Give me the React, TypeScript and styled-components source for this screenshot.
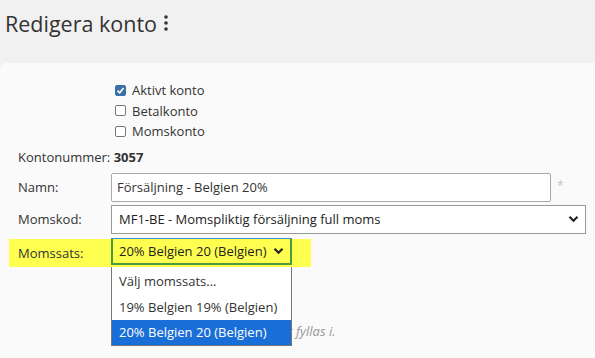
import styled, { createGlobalStyle } from 'styled-components';

const GlobalStyle = createGlobalStyle`
  html, body {
    margin: 0;
    padding: 0;
    background: #f1f1f1;
    font-family: "Open Sans", "Noto Sans", sans-serif;
    color: #333;
  }
`;

const Page = styled.div`
  width: 595px;
  height: 358px;
  overflow: hidden;
  display: flex;
  flex-direction: column;
`;

const Header = styled.div`
  display: flex;
  align-items: center;
  gap: 6px;
  height: 63px;
  padding: 0 0 17px 5px;
  box-sizing: border-box;
`;

const Title = styled.h1`
  margin: 0;
  font-size: 21.5px;
  font-weight: 400;
  color: #333;
`;

const Panel = styled.div`
  flex: 1;
  background: #fafafa;
  border-radius: 6px 0 0 0;
  padding: 19px 9px 0 9px;
  position: relative;
`;

const CheckList = styled.div`
  display: flex;
  flex-direction: column;
  gap: 4px;
  padding-left: 106px;
`;

const CheckRow = styled.label`
  display: flex;
  align-items: center;
  gap: 6px;
  font-size: 13px;
  height: 16.5px;
`;

const Box = styled.span<{ $checked?: boolean }>`
  width: 11px;
  height: 11px;
  border-radius: 2px;
  box-sizing: border-box;
  border: 1px solid ${p => (p.$checked ? '#3c6fa5' : '#777')};
  background: ${p => (p.$checked ? '#3c6fa5' : '#fff')};
  display: flex;
  align-items: center;
  justify-content: center;
`;

const Info = styled.div`
  font-size: 13px;
  padding: 8px 0 0 9px;
  height: 22px;
  b {
    font-weight: 700;
  }
`;

const Row = styled.div<{ $highlight?: boolean }>`
  display: flex;
  align-items: center;
  margin-top: 3px;
  background: ${p => (p.$highlight ? '#ffff50' : 'transparent')};
  position: relative;
`;

const HighlightRow = styled(Row)`
  width: 302px;
  margin-top: 5px;
  height: 28px;
`;

const Label = styled.div`
  width: 93px;
  padding-left: 9px;
  font-size: 13px;
  flex-shrink: 0;
`;

const TextInput = styled.div`
  width: 440px;
  height: 29px;
  box-sizing: border-box;
  border: 1px solid #aaa;
  border-radius: 2px;
  background: #fff;
  font-size: 13px;
  display: flex;
  align-items: center;
  padding-left: 5px;
`;

const Star = styled.span`
  margin-left: 6px;
  color: #b9c6d3;
  font-size: 12px;
  margin-top: -4px;
`;

const Select = styled.div<{ $width: number; $focus?: boolean }>`
  width: ${p => p.$width}px;
  height: ${p => (p.$focus ? 27 : 29)}px;
  box-sizing: border-box;
  border: ${p => (p.$focus ? '2px solid #4c9a3c' : '1px solid #999')};
  border-top: 1px solid ${p => (p.$focus ? '#3b8fd9' : '#999')};
  background: ${p => (p.$focus ? 'transparent' : '#fff')};
  font-size: 13px;
  display: flex;
  align-items: center;
  justify-content: space-between;
  padding: 0 6px 0 ${p => (p.$focus ? 6 : 7)}px;
  color: #222;
  align-self: flex-start;
  margin-top: ${p => (p.$focus ? -1 : 0)}px;
`;

const Chevron = () => (
  <svg width="11" height="8" viewBox="0 0 11 8">
    <path d="M1.5 1.8 L5.5 5.8 L9.5 1.8" stroke="#222" strokeWidth="2.2" fill="none" />
  </svg>
);

const Dropdown = styled.ul`
  position: absolute;
  left: 102px;
  top: 100%;
  width: 181px;
  margin: 0;
  padding: 0;
  list-style: none;
  background: #fff;
  border: 1px solid #777;
  border-top: none;
  box-sizing: border-box;
  z-index: 2;
`;

const Option = styled.li<{ $selected?: boolean }>`
  height: 25px;
  display: flex;
  align-items: center;
  padding-left: 7px;
  font-size: 13px;
  color: ${p => (p.$selected ? '#fff' : '#333')};
  background: ${p => (p.$selected ? '#1a6ed8' : 'transparent')};
  &:first-child {
    height: 28px;
  }
`;

const Note = styled.div`
  margin-top: 55px;
  padding-left: 107px;
  font-size: 13px;
  font-style: italic;
  color: #999;
`;

const Kebab = () => (
  <svg width="6" height="20" viewBox="0 0 6 20">
    <circle cx="3" cy="4" r="1.8" fill="#333" />
    <circle cx="3" cy="10" r="1.8" fill="#333" />
    <circle cx="3" cy="16" r="1.8" fill="#333" />
  </svg>
);

const Check = () => (
  <svg width="9" height="9" viewBox="0 0 9 9">
    <path d="M1.5 4.6 L3.6 6.7 L7.6 2" stroke="#fff" strokeWidth="1.6" fill="none" />
  </svg>
);

export default function App() {
  return (
    <Page>
      <GlobalStyle />
      <Header>
        <Title>Redigera konto</Title>
        <Kebab />
      </Header>
      <Panel>
        <CheckList>
          <CheckRow>
            <Box $checked>
              <Check />
            </Box>
            Aktivt konto
          </CheckRow>
          <CheckRow>
            <Box />
            Betalkonto
          </CheckRow>
          <CheckRow>
            <Box />
            Momskonto
          </CheckRow>
        </CheckList>
        <Info>
          Kontonummer: <b>3057</b>
        </Info>
        <Row>
          <Label>Namn:</Label>
          <TextInput>Försäljning - Belgien 20%</TextInput>
          <Star>*</Star>
        </Row>
        <Row>
          <Label>Momskod:</Label>
          <Select $width={475}>
            MF1-BE - Momspliktig försäljning full moms
            <Chevron />
          </Select>
        </Row>
        <HighlightRow $highlight>
          <Label>Momssats:</Label>
          <Select $width={181} $focus>
            20% Belgien 20 (Belgien)
            <Chevron />
          </Select>
          <Dropdown>
            <Option>Välj momssats...</Option>
            <Option>19% Belgien 19% (Belgien)</Option>
            <Option $selected>20% Belgien 20 (Belgien)</Option>
          </Dropdown>
        </HighlightRow>
        <Note>Fält markerade med * behöver fyllas i.</Note>
      </Panel>
    </Page>
  );
}
